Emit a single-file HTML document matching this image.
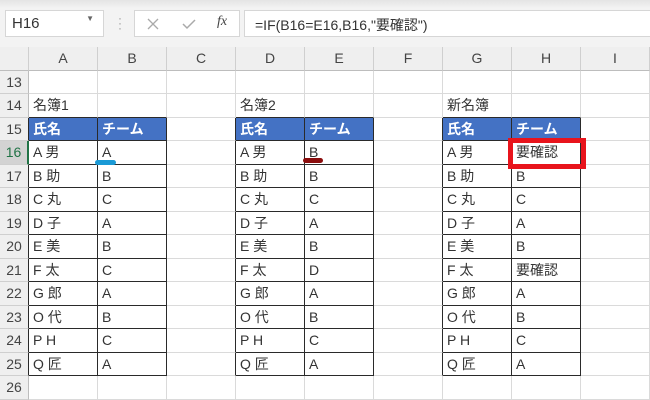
<!DOCTYPE html>
<html><head><meta charset="utf-8"><style>
*{margin:0;padding:0;box-sizing:border-box}
body{width:650px;height:400px;overflow:hidden;background:#fff;font-family:"Liberation Sans","Noto Sans CJK JP",sans-serif;position:relative}
.top{position:absolute;left:0;top:0;width:650px;height:47px;background:linear-gradient(#e4e4e4,#f3f3f3 8px,#f3f3f3)}
.box{position:absolute;background:#fff;border:1px solid #d6d6d6;height:27px;top:10px}
table{position:absolute;left:0;top:47px;border-collapse:separate;border-spacing:0;table-layout:fixed;width:650px}
td{border-right:1px solid #dadada;border-bottom:1px solid #dadada;font-size:14px;color:#333;padding:0 0 0 4px;white-space:nowrap;overflow:hidden;height:23.5px;line-height:22px}
tr.ch td{background:#efefef;text-align:center;color:#444;padding:0;border-right:1px solid #cfcfcf;border-bottom:1px solid #bdbdbd;font-size:14px}
td.rh{background:#efefef;color:#444;text-align:center;padding:0;border-right:1px solid #bdbdbd;border-bottom:1px solid #cfcfcf;font-size:14px}
td.sel{background:#d3d3d3;color:#217346}
td.csel{border-bottom:2px solid #217346}
td.h{background:#4472c4;color:#fff;font-weight:bold}
td.t{border-right:1px solid #2a2a2a;border-bottom:1px solid #2a2a2a}
td.bb{border-bottom:1px solid #2a2a2a}
td.br{border-right:1px solid #2a2a2a}
</style></head><body>
<div class="top"></div>
<div class="box" style="left:5px;width:99px;font-size:15px;color:#333;padding:4px 0 0 6px">H16<span style="position:absolute;right:9px;top:3px;font-size:8px;color:#666">▼</span></div>
<div style="position:absolute;left:118px;top:16px;color:#999;font-size:12px;line-height:5px">·<br>·<br>·</div>
<div class="box" style="left:134px;width:106px">
<svg style="position:absolute;left:11px;top:6px" width="14" height="14"><path d="M2 2L12 12M12 2L2 12" stroke="#aaa" stroke-width="1.3"/></svg>
<svg style="position:absolute;left:46px;top:6px" width="16" height="14"><path d="M2 7L6 11L14 3" stroke="#aaa" stroke-width="1.5" fill="none"/></svg>
<span style="position:absolute;left:82px;top:3px;color:#444;font-size:14px;font-style:italic;font-family:'Liberation Serif',serif">fx</span></div>
<div class="box" style="left:244px;width:410px;font-size:14px;color:#333;padding:4px 0 0 10px">=IF(B16=E16,B16,"要確認")</div>
<svg style="position:absolute;left:8px;top:51px" width="20" height="18"><polygon points="18,2 18,16 4,16" fill="#bdbdbd"/></svg>
<table>
<colgroup><col style="width:29px"><col style="width:69px"><col style="width:69px"><col style="width:69px"><col style="width:69px"><col style="width:69px"><col style="width:69px"><col style="width:69px"><col style="width:69px"><col style="width:69px"></colgroup>
<tr class="ch"><td></td><td>A</td><td>B</td><td>C</td><td>D</td><td>E</td><td>F</td><td>G</td><td class="sel csel">H</td><td>I</td></tr>
<tr><td class="rh">13</td><td></td><td></td><td></td><td></td><td></td><td></td><td></td><td></td><td></td></tr>
<tr><td class="rh">14</td><td class="bb">名簿1</td><td class="bb"></td><td></td><td class="bb">名簿2</td><td class="bb"></td><td></td><td class="bb">新名簿</td><td class="bb"></td><td></td></tr>
<tr><td class="rh br">15</td><td class="h t">氏名</td><td class="h t">チーム</td><td class="br"></td><td class="h t">氏名</td><td class="h t">チーム</td><td class="br"></td><td class="h t">氏名</td><td class="h t">チーム</td><td></td></tr>
<tr><td class="rh sel" style="border-right:2px solid #217346">16</td><td class="t">A 男</td><td class="t">A</td><td class="br"></td><td class="t">A 男</td><td class="t">B</td><td class="br"></td><td class="t">A 男</td><td class="t">要確認</td><td></td></tr>
<tr><td class="rh br">17</td><td class="t">B 助</td><td class="t">B</td><td class="br"></td><td class="t">B 助</td><td class="t">B</td><td class="br"></td><td class="t">B 助</td><td class="t">B</td><td></td></tr>
<tr><td class="rh br">18</td><td class="t">C 丸</td><td class="t">C</td><td class="br"></td><td class="t">C 丸</td><td class="t">C</td><td class="br"></td><td class="t">C 丸</td><td class="t">C</td><td></td></tr>
<tr><td class="rh br">19</td><td class="t">D 子</td><td class="t">A</td><td class="br"></td><td class="t">D 子</td><td class="t">A</td><td class="br"></td><td class="t">D 子</td><td class="t">A</td><td></td></tr>
<tr><td class="rh br">20</td><td class="t">E 美</td><td class="t">B</td><td class="br"></td><td class="t">E 美</td><td class="t">B</td><td class="br"></td><td class="t">E 美</td><td class="t">B</td><td></td></tr>
<tr><td class="rh br">21</td><td class="t">F 太</td><td class="t">C</td><td class="br"></td><td class="t">F 太</td><td class="t">D</td><td class="br"></td><td class="t">F 太</td><td class="t">要確認</td><td></td></tr>
<tr><td class="rh br">22</td><td class="t">G 郎</td><td class="t">A</td><td class="br"></td><td class="t">G 郎</td><td class="t">A</td><td class="br"></td><td class="t">G 郎</td><td class="t">A</td><td></td></tr>
<tr><td class="rh br">23</td><td class="t">O 代</td><td class="t">B</td><td class="br"></td><td class="t">O 代</td><td class="t">B</td><td class="br"></td><td class="t">O 代</td><td class="t">B</td><td></td></tr>
<tr><td class="rh br">24</td><td class="t">P H</td><td class="t">C</td><td class="br"></td><td class="t">P H</td><td class="t">C</td><td class="br"></td><td class="t">P H</td><td class="t">C</td><td></td></tr>
<tr><td class="rh br">25</td><td class="t">Q 匠</td><td class="t">A</td><td class="br"></td><td class="t">Q 匠</td><td class="t">A</td><td class="br"></td><td class="t">Q 匠</td><td class="t">A</td><td></td></tr>
<tr><td class="rh">26</td><td></td><td></td><td></td><td></td><td></td><td></td><td></td><td></td><td></td></tr>
</table>
<div style="position:absolute;left:95px;top:160px;width:21px;height:5px;border-radius:3px;background:#1a9ad6"></div>
<div style="position:absolute;left:303px;top:158px;width:20px;height:5px;border-radius:3px;background:#8b0d0d"></div>
<div style="position:absolute;left:508px;top:138px;width:78px;height:31px;border:5px solid #e8141c"></div>
</body></html>
